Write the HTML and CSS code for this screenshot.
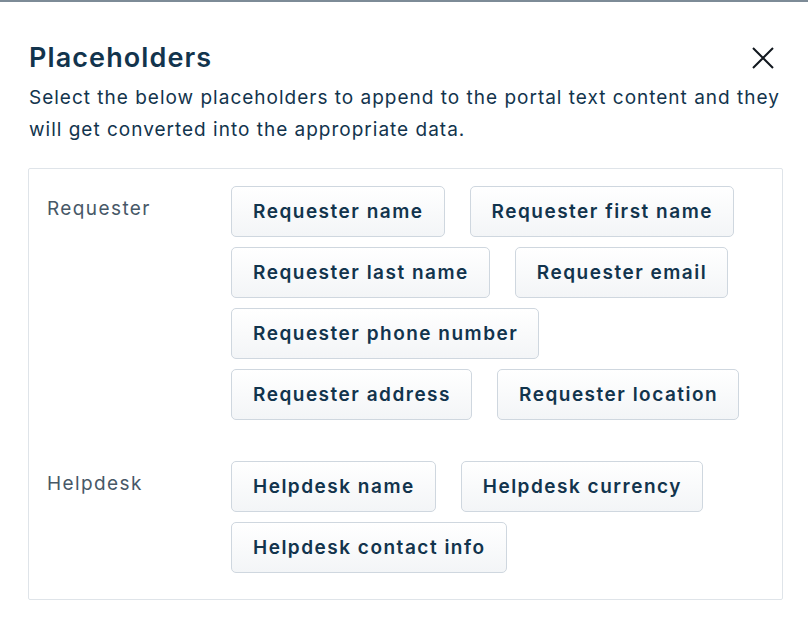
FILE: index.html
```html
<!DOCTYPE html>
<html>
<head>
<meta charset="utf-8">
<link rel="stylesheet" href="styles.css">
</head>
<body>
<div class="topbar"></div>
<div class="modal">
  <div class="header">
    <h1 class="title">Placeholders</h1>
    <button class="close" aria-label="Close">
      <svg width="24" height="24" viewBox="0 0 24 24"><path d="M2 2 L22 22 M22 2 L2 22" stroke="#12181f" stroke-width="2" fill="none"/></svg>
    </button>
  </div>
  <p class="desc">Select the below placeholders to append to the portal text content and they will get converted into the appropriate data.</p>
  <div class="panel">
    <div class="group">
      <div class="label">Requester</div>
      <div class="chips">
        <button class="chip">Requester name</button>
        <button class="chip">Requester first name</button>
        <button class="chip">Requester last name</button>
        <button class="chip">Requester email</button>
        <button class="chip">Requester phone number</button>
        <button class="chip">Requester address</button>
        <button class="chip">Requester location</button>
      </div>
    </div>
    <div class="group">
      <div class="label">Helpdesk</div>
      <div class="chips">
        <button class="chip">Helpdesk name</button>
        <button class="chip">Helpdesk currency</button>
        <button class="chip">Helpdesk contact info</button>
      </div>
    </div>
  </div>
</div>
</body>
</html>
```
FILE: styles.css
```css
* { box-sizing: border-box; }
body {
  margin: 0;
  background: #ffffff;
  font-family: Inter, "Noto Sans", "Liberation Sans", sans-serif;
  color: #12344d;
}
.topbar {
  height: 2px;
  background: #7d8b97;
}
.modal {
  padding: 0 25px 0 28px;
}
.header {
  display: flex;
  align-items: center;
  justify-content: space-between;
  margin-top: 38px;
  height: 34px;
}
.title {
  margin: 0 0 0 1px;
  font-size: 27px;
  font-weight: 600;
  color: #12344d;
  letter-spacing: 1.1px;
}
.close {
  border: none;
  background: none;
  padding: 0;
  width: 24px;
  height: 24px;
  margin-right: 8px;
  margin-top: 2px;
}
.close svg { display: block; }
.desc {
  margin: 8px 0 0 1px;
  font-size: 19px;
  line-height: 32px;
  letter-spacing: 1px;
  color: #12344d;
}
.panel {
  margin-top: 22px;
  border: 1px solid #dfe4e9;
  border-radius: 2px;
  padding: 17px 20px 26px 18px;
  display: flex;
  flex-direction: column;
  gap: 41px;
}
.group {
  display: flex;
  align-items: flex-start;
}
.label {
  width: 184px;
  flex-shrink: 0;
  font-size: 19px;
  letter-spacing: 1.4px;
  color: #475867;
  padding-top: 11px;
}
.chips {
  display: flex;
  flex-wrap: wrap;
  column-gap: 25px;
  row-gap: 10px;
}
.chip {
  height: 51px;
  padding: 0 20px 0 21px;
  border: 1px solid #cfd7df;
  border-radius: 5px;
  background: linear-gradient(#ffffff, #f3f5f7);
  font-family: inherit;
  font-size: 19px;
  font-weight: 600;
  letter-spacing: 1.5px;
  color: #12344d;
}
```
